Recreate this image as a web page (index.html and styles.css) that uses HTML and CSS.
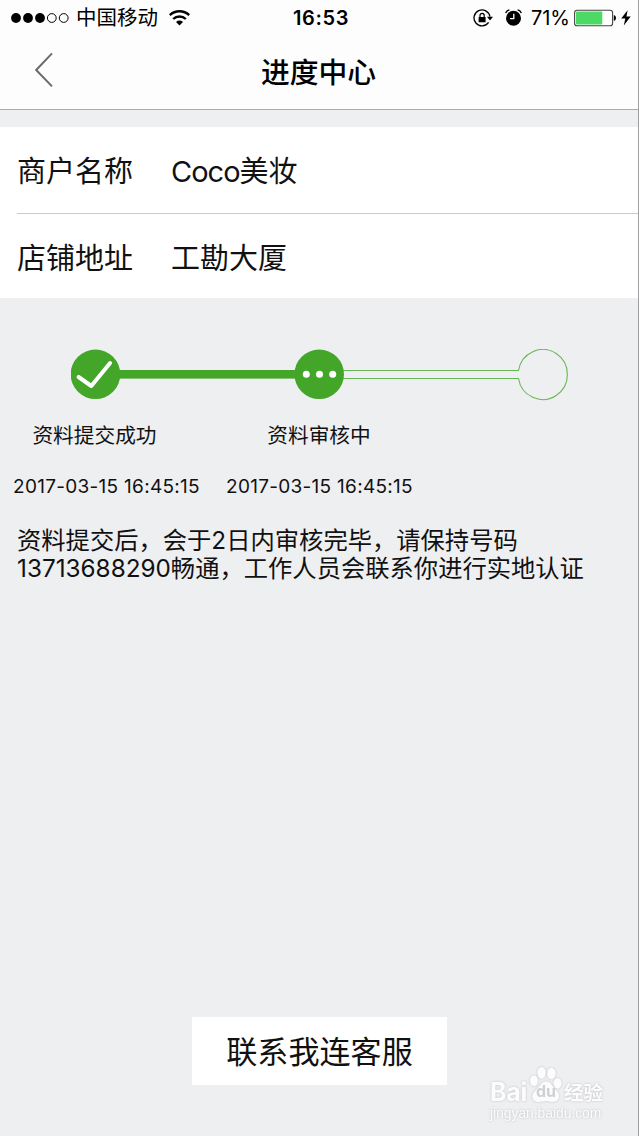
FILE: index.html
```html
<!DOCTYPE html>
<html lang="zh">
<head>
  <meta charset="UTF-8">
  <meta name="viewport" content="width=device-width, initial-scale=1.0">
  <title>进度中心</title>
  <link rel="stylesheet" href="styles.css">
</head>
<body>

<div class="page">
  <header class="header">
    <div class="status-bar">
      <div class="status-left">
        <svg class="signal" width="59" height="12" viewBox="0 0 59 12">
          <circle cx="5" cy="6" r="4.9"/>
          <circle cx="17" cy="6" r="4.9"/>
          <circle cx="29" cy="6" r="4.9"/>
          <circle cx="40.8" cy="6" r="4.4" fill="none" stroke="#000"/>
          <circle cx="52.7" cy="6" r="4.4" fill="none" stroke="#000"/>
        </svg>
        <span class="carrier">中国移动</span>
        <svg class="wifi" width="21" height="16" viewBox="0 0 21 16">
          <path d="M0.8 5.2 A14 14 0 0 1 20.2 5.2" fill="none" stroke="#000" stroke-width="2.4"/>
          <path d="M4.2 9 A9 9 0 0 1 16.8 9" fill="none" stroke="#000" stroke-width="2.4"/>
          <path d="M7 11.9 Q10.5 9 14 11.9 L10.5 15.6 Z"/>
        </svg>
      </div>
      <span class="time">16:53</span>
      <div class="status-right">
        <svg class="lock" width="20" height="18" viewBox="0 0 20 18">
          <path d="M15.6 13.4 A8 8 0 1 1 16.9 7.6" fill="none" stroke="#000" stroke-width="1.3"/>
          <path d="M14 7.8 H20 L17 11.4 Z"/>
          <rect x="5.6" y="8" width="7" height="5.2" rx="0.5"/>
          <path d="M7 8.4 V6.4 A2.1 2.1 0 0 1 11.2 6.4 V8.4" fill="none" stroke="#000" stroke-width="1.2"/>
        </svg>
        <svg class="alarm" width="17" height="18" viewBox="0 0 17 18">
          <circle cx="8.5" cy="9.2" r="7.5"/>
          <path d="M0.7 4.2 Q1.5 1.3 4.4 0.8" fill="none" stroke="#000" stroke-width="1.3"/>
          <path d="M16.3 4.2 Q15.5 1.3 12.6 0.8" fill="none" stroke="#000" stroke-width="1.3"/>
          <path d="M8.8 4.8 V9.6 H5" fill="none" stroke="#fff" stroke-width="1.3"/>
        </svg>
        <span class="percent">71%</span>
        <svg class="battery" width="42" height="18" viewBox="0 0 42 18">
          <rect x="0.6" y="1.2" width="38" height="15.6" rx="2.6" fill="#fff" stroke="#444" stroke-width="1.1"/>
          <rect x="2" y="2.6" width="26.3" height="12.8" rx="0.8" fill="#4cd964"/>
          <path d="M39.8 6 Q42 6.5 42 9 Q42 11.5 39.8 12 Z"/>
        </svg>
        <svg class="bolt" width="10" height="16" viewBox="0 0 10 16">
          <path d="M6.6 0.3 L0.2 8.6 H4.3 L2.8 15.6 L9.7 6.5 H5.5 Z"/>
        </svg>
      </div>
    </div>
    <div class="nav">
      <svg class="back" width="18" height="36" viewBox="0 0 18 36">
        <path d="M17 1.4 L1.2 18 L17 34.4" fill="none" stroke="#6b6b6b" stroke-width="2"/>
      </svg>
      <h1 class="title">进度中心</h1>
    </div>
  </header>

  <section class="info">
    <div class="info-row">
      <span class="label">商户名称</span>
      <span class="value"><span class="latin">Coco</span>美妆</span>
    </div>
    <div class="info-row">
      <span class="label">店铺地址</span>
      <span class="value">工勘大厦</span>
    </div>
  </section>

  <main class="progress">
    <svg class="track" width="498" height="52" viewBox="0 0 498 52">
      <rect x="40" y="21" width="200" height="8.6" fill="#43a629"/>
      <circle cx="24.5" cy="25.3" r="24.8" fill="#43a629"/>
      <path d="M7.6 28 L20.3 37 L39.1 14" fill="none" stroke="#fff" stroke-width="4" stroke-linecap="round" stroke-linejoin="round"/>
      <path d="M272 21.5 H447.5 A24.6 25 0 1 1 447.5 29.5 H272" fill="none" stroke="#69b755" stroke-width="1.1"/>
      <circle cx="248.2" cy="25.3" r="24.8" fill="#43a629"/>
      <circle cx="235.3" cy="25.3" r="3.5" fill="#fff"/>
      <circle cx="248.5" cy="25.3" r="3.5" fill="#fff"/>
      <circle cx="261.7" cy="25.3" r="3.5" fill="#fff"/>
    </svg>
    <div class="steps">
      <div class="step">
        <div class="step-name">资料提交成功</div>
        <div class="step-date">2017-03-15 16:45:15</div>
      </div>
      <div class="step">
        <div class="step-name current">资料审核中</div>
        <div class="step-date">2017-03-15 16:45:15</div>
      </div>
    </div>
    <p class="tip">资料提交后，会于2日内审核完毕，请保持号码<br>13713688290畅通，工作人员会联系你进行实地认证</p>
  </main>

  <button class="service">联系我连客服</button>

  <div class="watermark">
    <div class="logo">
      <span class="logo-bai">Bai</span>
      <span class="paw">
        <svg width="34" height="37" viewBox="0 0 36 38" preserveAspectRatio="none">
          <ellipse cx="5.3" cy="15" rx="4.2" ry="5.6"/>
          <ellipse cx="13.3" cy="7" rx="4.5" ry="6"/>
          <ellipse cx="23.7" cy="7.6" rx="4.5" ry="5.8"/>
          <ellipse cx="30.2" cy="17.8" rx="4.3" ry="5.5"/>
          <path d="M18 16 C23 16 24 20 28 24 C34 29 33 37 25 37 C21 37 21 36 18 36 C15 36 14 37 10 37 C3 37 1 30 7 25 C12 21 13 16 18 16 Z"/>
        </svg>
        <span class="logo-du">du</span>
      </span>
      <span class="logo-cn">经验</span>
    </div>
    <div class="site">jingyan.baidu.com</div>
  </div>
</div>

</body>
</html>
```

FILE: styles.css
```css
* {
  box-sizing: border-box;
}
body {
  margin: 0;
  font-family: Inter, "Noto Sans CJK SC", sans-serif;
  color: #111;
  background-color: #eeeff1;
}
svg {
  display: block;
  flex: none;
}
.page {
  position: relative;
  display: flex;
  flex-direction: column;
  height: 1136px;
  border-right: 1px solid #a0a0a2;
  white-space: nowrap;
  overflow: hidden;
}
.header {
  height: 110px;
  background: #fdfdfd;
  border-bottom: 1px solid #aaaaac;
  color: #000;
}
.status-bar {
  display: grid;
  grid-template-columns: 1fr auto 1fr;
  align-items: center;
  height: 35px;
  padding: 0 7px 0 11px;
  font-size: 20px;
}
.status-left,
.status-right {
  display: flex;
  align-items: center;
}
.status-right {
  justify-content: flex-end;
}
.carrier {
  margin: 0 11px 0 6px;
  font-size: 20.5px;
  line-height: 35px;
}
.time {
  font-weight: 600;
  letter-spacing: 0.6px;
}
.alarm {
  margin: 0 9px 0 12px;
}
.battery {
  margin: 0 5px 0 4px;
}
.nav {
  display: grid;
  grid-template-columns: 35px 18px 1fr 54px;
  align-items: center;
  height: 74px;
}
.back {
  grid-column: 2;
  margin-bottom: 5px;
}
.title {
  margin: 0;
  padding-top: 1px;
  font-size: 28.8px;
  font-weight: 500;
  line-height: 74px;
  text-align: center;
}
.info {
  height: 171px;
  margin-top: 17px;
  padding-left: 17px;
  background: #fff;
}
.info-row {
  display: flex;
  align-items: center;
  height: 84px;
  font-size: 29px;
}
.info-row:first-child {
  height: 87px;
  padding-bottom: 2px;
  border-bottom: 1px solid #cacaca;
}
.label {
  width: 154px;
}
.latin {
  letter-spacing: -1px;
}
.progress {
  padding-top: 51px;
}
.track {
  margin-left: 71px;
}
.steps {
  display: flex;
  gap: 26px;
  margin: 18px 0 0 13px;
}
.step {
  width: 187px;
}
.step-name {
  padding-right: 24px;
  font-size: 20.7px;
  line-height: 34px;
  text-align: center;
}
.step-name.current {
  padding-right: 1px;
}
.step-date {
  margin-top: 17px;
  font-size: 19px;
  line-height: 34px;
  letter-spacing: 0.29px;
}
.tip {
  margin: 22px 0 0 17px;
  font-size: 24.3px;
  line-height: 28px;
}
.service {
  width: 255px;
  height: 68px;
  margin: auto 0 51px 192px;
  padding: 0 0 4px;
  border: none;
  background: #fff;
  color: #111;
  font-family: inherit;
  font-size: 31.1px;
}
.watermark {
  position: absolute;
  left: 490px;
  top: 1066px;
  color: #fcfcfd;
  fill: #fcfcfd;
  filter: drop-shadow(0 0 1px #bfc0c2);
}
.logo {
  display: flex;
  align-items: flex-end;
  height: 37px;
}
.logo-bai {
  width: 39px;
  font-size: 25px;
  font-weight: 700;
  line-height: 22px;
  letter-spacing: -0.3px;
}
.paw {
  position: relative;
}
.logo-du {
  position: absolute;
  left: 7px;
  top: 14px;
  color: #cfd0d2;
  font-size: 16px;
  font-weight: 700;
  line-height: 22px;
}
.logo-cn {
  margin-left: 1px;
  font-size: 19.5px;
  font-weight: 700;
  line-height: 20px;
}
.site {
  margin-top: 2px;
  font-family: "Liberation Sans", sans-serif;
  font-size: 13.8px;
  line-height: 18px;
}
```
